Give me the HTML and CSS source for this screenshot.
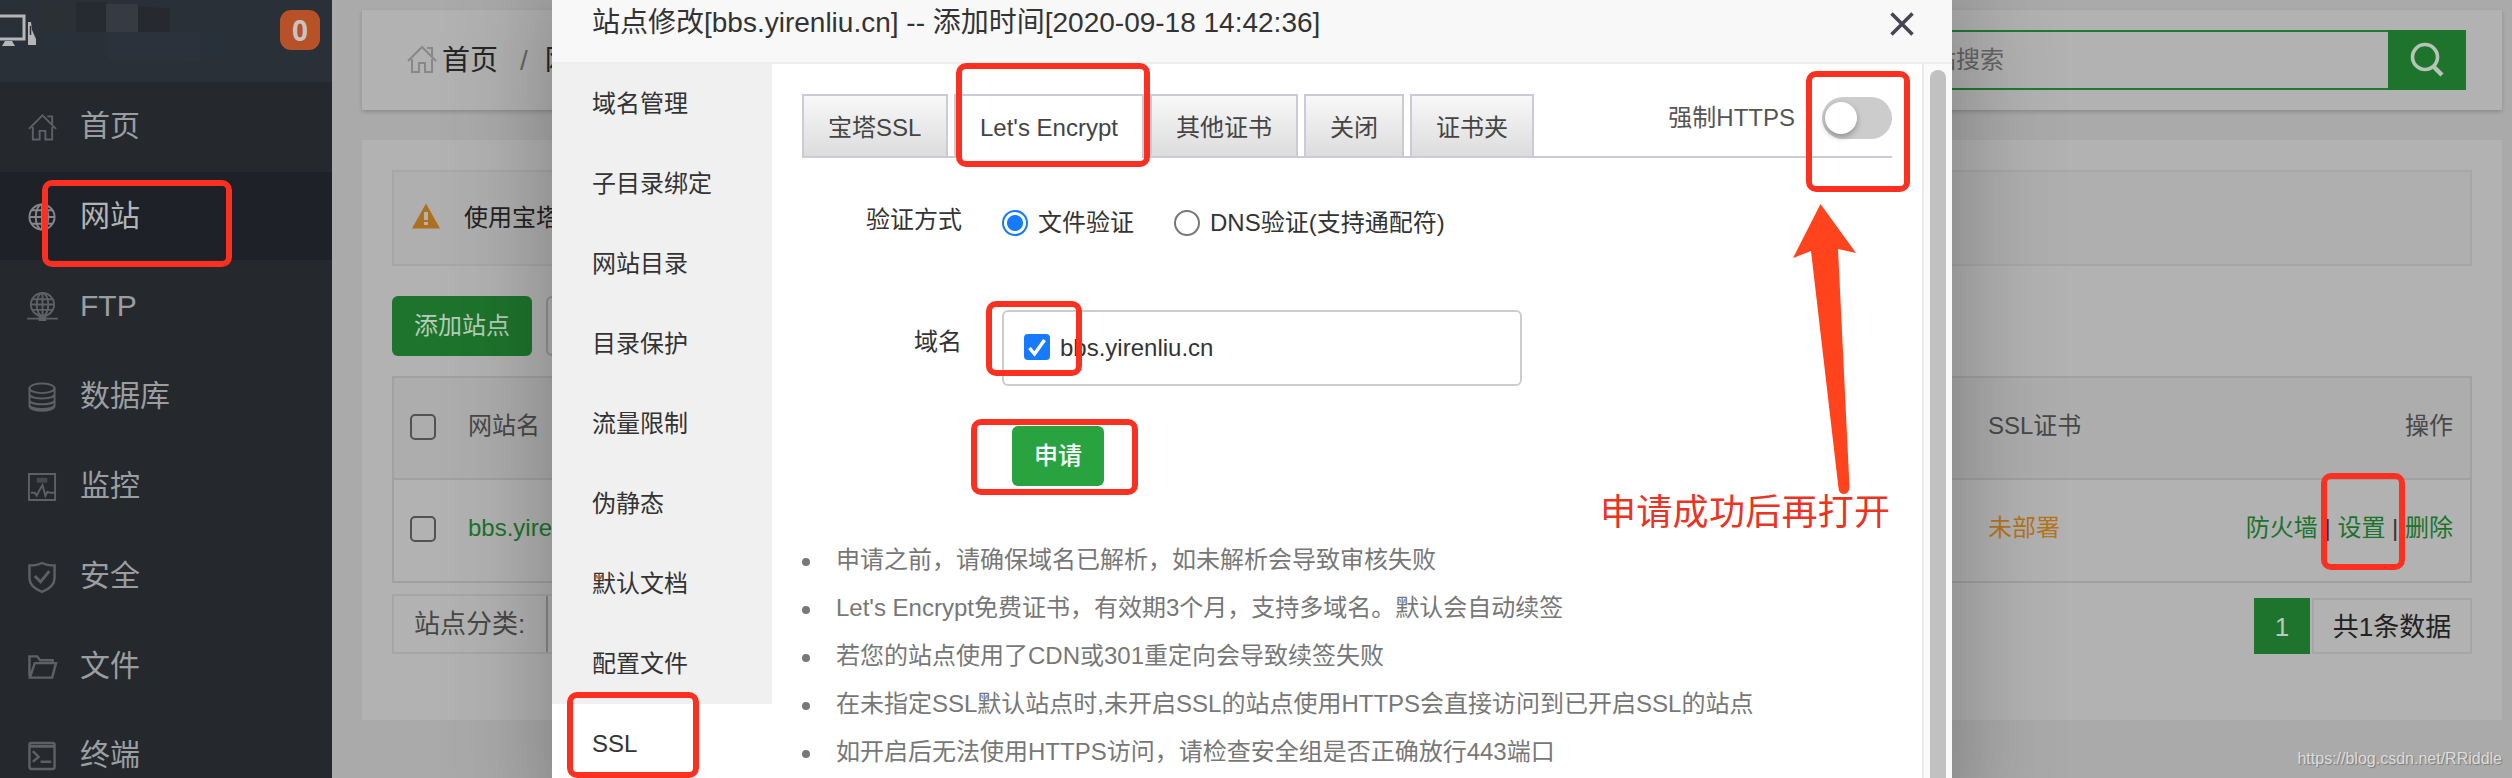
FILE: index.html
```html
<!DOCTYPE html>
<html lang="zh-CN">
<head>
<meta charset="utf-8">
<title>网站</title>
<link rel="stylesheet" href="styles.css">
</head>
<body>
<div class="app">
  <aside class="sidebar">
    <div class="brand">
      <svg class="brand-art" width="240" height="64" viewBox="0 0 240 64">
        <path fill="#2a3033" d="M40 8L46 3H76V32H40z"/><path fill="#262b31" d="M76 2H106V32H76z"/><path fill="#363a42" d="M106 4H138V32H106z"/><path fill="#26292f" d="M138 6L170 9V32H138z"/><path fill="#28303a" d="M45 32H76V54L48 50z"/><path fill="#2b323b" d="M108 32H200V62L108 60z"/><path fill="#28303a" d="M200 32H230V60H200z"/>
        <path d="M-4 16H24V39H-4z" fill="none" stroke="#b4b6b9" stroke-width="3"/><path d="M2 46l3-5h7l3 5z" fill="#b4b6b9"/><path d="M28 22h3l1 8 4 9v6h-8z" fill="#b4b6b9"/><path d="M30.500 26v9" stroke="#2a3038" stroke-width="1.500"/>
      </svg>
      <span class="badge">0</span>
    </div>
    <nav class="menu">
      <a class="menu-item"><svg class="mi" viewBox="0 0 30 30"><path d="M1 17L15 3l14 14M5 15v13h7v-9h6v9h7V15M20 4h5v8"/></svg>首页</a>
      <a class="menu-item active"><svg class="mi" viewBox="0 0 30 30"><circle cx="14.500" cy="15" r="13"/><ellipse cx="14.500" cy="15" rx="6.500" ry="13"/><path d="M14.500 2v26M1.500 15h26M4 8h21M4 22h21"/></svg>网站</a>
      <a class="menu-item"><svg class="mi" viewBox="0 0 30 30"><circle cx="15" cy="12.500" r="12"/><ellipse cx="15" cy="12.500" rx="6" ry="12"/><path d="M15 1v23M3 12.500h24M5 7h20M5 18h20M-1 27h32"/><path d="M11 27h8" stroke-width="5"/></svg>FTP</a>
      <a class="menu-item"><svg class="mi" viewBox="0 0 30 30"><ellipse cx="14.500" cy="6" rx="13" ry="5"/><path d="M1.500 6v18c0 7 26 7 26 0V6M1.500 12c0 6 26 6 26 0M1.500 18c0 6 26 6 26 0M1.500 23c0 6 26 6 26 0"/></svg>数据库</a>
      <a class="menu-item"><svg class="mi" viewBox="0 0 30 30"><path d="M1 1.500h27v27H1zM3 21h4l2 3 3-6 3-5 3 11 2-4 3 1h4"/><path d="M9 8h11" stroke-width="5" opacity=".6"/></svg>监控</a>
      <a class="menu-item"><svg class="mi" viewBox="0 0 30 30"><path stroke-width="2.500" d="M14.500 0.500c4 2 8 2.500 13 2.500v13c0 7-7 12-13 14.500C8.500 28 1.500 23 1.500 16V3c5 0 9-.5 13-2.500z"/><path stroke-width="3" d="M7 14l6 6 9-11"/></svg>安全</a>
      <a class="menu-item"><svg class="mi" viewBox="0 0 30 30"><path stroke-width="2.500" d="M3 26L1.500 24V4h8l3 4h13v3M2 26L7 11h22l-4 15z"/></svg>文件</a>
      <a class="menu-item"><svg class="mi" viewBox="0 0 30 30"><rect x="1.500" y="1.500" width="26" height="27" rx="2" stroke-width="2.500"/><path d="M2 5h25" stroke-width="3"/><path stroke-width="2.500" d="M5 10l6 6-6 5M13 21h11"/></svg>终端</a>
    </nav>
  </aside>
  <main class="main">
    <header class="topbar">
      <div class="crumbs"><svg class="home" viewBox="0 0 30 30"><path d="M1 17L15 3l14 14M5 15v13h7v-9h6v9h7V15M20 4h5v8"/></svg><span>首页</span><i>/</i><span>网站管理</span></div>
      <div class="search"><div class="search-input">网站搜索</div><div class="search-btn"><svg width="34" height="34" viewBox="0 0 34 34"><ellipse cx="15" cy="14" rx="12.500" ry="12.500"/><path d="M23 23l9 9" stroke-width="4.500"/></svg></div></div>
    </header>
    <section class="panel">
      <div class="notice"><svg width="28" height="26" viewBox="0 0 28 26"><path fill="#ad6f20" d="M14 0.500L28 25.500H0z"/><path stroke="#b5b2ae" stroke-width="4" d="M14 9v8M14 19v3"/></svg><span>使用宝塔创建</span></div>
      <div class="tools"><div class="btn add">添加站点</div><div class="btn plain"></div></div>
      <div class="table">
        <div class="tr head"><span class="box"></span><span class="name">网站名</span><span class="ssl">SSL证书</span><span class="ops">操作</span></div>
        <div class="tr"><span class="box"></span><span class="name link">bbs.yirenliu.cn</span><span class="ssl warn">未部署</span><span class="ops"><b>防火墙</b> | <b>设置</b> | <b>删除</b></span></div>
      </div>
      <div class="foot">
        <div class="category"><span>站点分类:</span><div class="select"></div></div>
        <div class="pager"><span class="page">1</span><span class="total">共1条数据</span></div>
      </div>
    </section>
  </main>
</div>

<div class="modal">
  <div class="modal-title"><span>站点修改[bbs.yirenliu.cn] -- 添加时间[2020-09-18 14:42:36]</span><svg width="24" height="24" viewBox="0 0 24 24"><path d="M1.500 1.500l21 21M22.500 1.500l-21 21"/></svg></div>
  <div class="modal-body">
    <nav class="subnav"><a>域名管理</a><a>子目录绑定</a><a>网站目录</a><a>目录保护</a><a>流量限制</a><a>伪静态</a><a>默认文档</a><a>配置文件</a><a class="on">SSL</a></nav>
    <div class="content">
      <div class="tabs"><span>宝塔SSL</span><span class="on">Let's Encrypt</span><span>其他证书</span><span>关闭</span><span>证书夹</span>
        <div class="force">强制HTTPS<div class="switch"><div class="knob"></div></div></div>
      </div>
      <div class="row verify"><label>验证方式</label><div class="opt"><i class="radio checked"></i>文件验证</div><div class="opt"><i class="radio"></i>DNS验证(支持通配符)</div></div>
      <div class="row domain"><label>域名</label><div class="domain-box"><svg width="26" height="26" viewBox="0 0 26 26"><rect width="26" height="26" rx="4" fill="#157afb"/><path d="M5.500 14l5 6L20.500 6" fill="none" stroke="#fff" stroke-width="3.500"/></svg>bbs.yirenliu.cn</div></div>
      <div class="apply">申请</div>
      <ul class="tips"><li>申请之前，请确保域名已解析，如未解析会导致审核失败</li><li>Let's Encrypt免费证书，有效期3个月，支持多域名。默认会自动续签</li><li>若您的站点使用了CDN或301重定向会导致续签失败</li><li>在未指定SSL默认站点时,未开启SSL的站点使用HTTPS会直接访问到已开启SSL的站点</li><li>如开启后无法使用HTTPS访问，请检查安全组是否正确放行443端口</li></ul>
    </div>
    <div class="scroll"><div class="thumb"></div></div>
  </div>
</div>

<div class="mark m-site"></div><div class="mark m-tab"></div><div class="mark m-check"></div><div class="mark m-apply"></div><div class="mark m-ssl"></div><div class="mark m-switch"></div><div class="mark m-set"></div>
<svg class="arrow" width="64" height="292" viewBox="0 0 64 292"><path fill="#ff431c" d="M27.500 0L63 49L45 45L56.500 283Q56 290 51 290Q46 290 45.500 284L18 47L0 54z"/></svg>
<div class="note">申请成功后再打开</div>
<div class="watermark">https://blog.csdn.net/RRiddle</div>
</body>
</html>
```

FILE: styles.css
```css
* { box-sizing: border-box; }
html { overflow: hidden; }
body { margin: 0; width: 2512px; height: 778px; overflow: hidden; position: relative; background: #aaa; font: 24px/36px "Liberation Sans", "Noto Sans CJK SC", sans-serif; color: #333; white-space: nowrap; }
svg { display: block; flex: none; overflow: visible; }
i { font-style: normal; }
.app { display: flex; height: 778px; }

/* sidebar */
.sidebar { width: 332px; height: 778px; flex: none; background: #25292e; overflow: hidden; }
.brand { height: 82px; background: #2a3037; display: flex; justify-content: space-between; padding-right: 12px; }
.badge { width: 40px; height: 40px; margin-top: 10px; border-radius: 11px; background: #b65128; color: #c9c3bf; font: bold 28px/40px "Noto Sans", sans-serif; text-align: center; }
.menu-item { display: flex; align-items: center; height: 90px; padding: 0 0 2px 28px; font-size: 30px; color: #9b9ea1; gap: 23px; }
.menu-item.active { background: #1e2127; color: #b3b4b6; height: 88px; margin-bottom: 2px; padding-bottom: 0; }
.menu-item:last-child { height: 66px; padding: 25px 0 0 28px; align-items: flex-start; }
.mi { width: 29px; height: 30px; margin-top: 2px; fill: none; stroke: #5d6165; stroke-width: 2; }
.menu-item:last-child .mi { margin-top: 4px; }
.active .mi { stroke: #85888c; }

/* page */
.main { flex: 1; padding: 10px 10px 0 30px; display: flex; flex-direction: column; gap: 30px; }
.topbar { height: 100px; background: #b2b2b2; box-shadow: 0 2px 4px rgba(0,0,0,.18); display: flex; justify-content: space-between; align-items: center; padding: 0 36px 0 45px; }
.crumbs { display: flex; font-size: 28px; color: #262626; padding-top: 1px; }
.home { width: 30px; height: 30px; margin: 1px 5px 0 0; fill: none; stroke: #888; stroke-width: 2; }
.crumbs i { margin: 0 17px 0 22px; color: #666; }
.search { display: flex; width: 620px; height: 60px; }
.search-input { flex: 1; border: 2px solid #217a31; border-right: 0; padding: 10px 0 0 60px; color: #666; }
.search-btn { width: 78px; background: #1e742c; display: flex; align-items: center; justify-content: center; }
.search-btn svg { fill: none; stroke: #b5c4b6; stroke-width: 3.600; }
.panel { height: 580px; background: #b2b2b2; padding: 30px 30px 0; }
.notice { height: 96px; border: 2px solid #a7a7a7; background: #afafaf; display: flex; align-items: center; gap: 24px; padding-left: 18px; color: #222; }
.notice svg { margin-bottom: 4px; }
.tools { display: flex; gap: 14px; margin-top: 30px; }
.btn { height: 60px; border-radius: 6px; line-height: 60px; text-align: center; }
.add { width: 140px; background: #1e742c; color: #b6cdb9; }
.plain { width: 120px; border: 2px solid #929292; }
.table { margin-top: 20px; border: 2px solid #a1a1a1; }
.tr { height: 101px; display: flex; align-items: center; padding: 0 17px 5px 16px; }
.tr.head { height: 102px; background: #adadad; border-bottom: 2px solid #a1a1a1; color: #484848; padding-bottom: 4px; }
.box { width: 26px; height: 26px; border: 2px solid #525252; border-radius: 5px; margin-top: 2px; }
.name { margin-left: 32px; width: 1520px; }
.link, .ops b { color: #1b732b; font-weight: 400; }
.warn { color: #b5751c; }
.ops { margin-left: auto; }
.foot { display: flex; justify-content: space-between; margin-top: 11px; }
.category { height: 60px; width: 420px; display: flex; border: 2px solid #a6a6a6; line-height: 56px; color: #484848; font-size: 26px; }
.category span { width: 152px; padding-left: 20px; }
.select { flex: 1; border-left: 2px solid #888; }
.pager { display: flex; height: 56px; margin-top: 4px; gap: 2px; line-height: 54px; }
.page { width: 56px; background: #1e742c; color: #b6cdb9; text-align: center; line-height: 58px; font-size: 26px; }
.total { width: 160px; border: 2px solid #a6a6a6; text-align: center; color: #222; font-size: 26px; }

/* dialog */
.modal { position: absolute; left: 552px; top: -22px; width: 1400px; height: 860px; background: #fff; box-shadow: 2px 2px 100px rgba(0,0,0,.3); padding-top: 22px; }
.modal-title { height: 64px; background: #f8f8f8; box-shadow: 0 -22px #f8f8f8; border-bottom: 2px solid #eee; display: flex; justify-content: space-between; padding: 5px 38px 0 40px; font-size: 28px; }
.modal-title svg { margin-top: 7px; stroke: #444452; stroke-width: 3.500; }
.modal-body { display: flex; height: 796px; }
.subnav { width: 220px; display: flex; flex-direction: column; }
.subnav a { height: 80px; line-height: 80px; padding-left: 40px; background: #f0f0f0; }
.subnav .on { background: #fff; }
.content { flex: 1; padding: 30px 30px 0; }
.tabs { display: flex; gap: 6px; height: 64px; border-bottom: 2px solid #cacad9; color: #444; }
.tabs > span { height: 62px; padding: 2px 24px 0; line-height: 60px; border: 2px solid #cacad9; border-bottom: 0; background: linear-gradient(#f8f8f8, #dcdcdc); }
.tabs > span:first-child { width: 146px; }
.tabs > .on { background: #fff; height: 64px; width: 190px; }
.force { margin-left: auto; height: 48px; display: flex; align-items: center; gap: 27px; color: #555; }
.switch { width: 70px; height: 42px; border-radius: 21px; background: #ccc; padding: 5px 3px; }
.knob { width: 32px; height: 32px; border-radius: 50%; background: #fff; box-shadow: 0 3px 6px rgba(0,0,0,.3); }
.row { display: flex; }
.row label { width: 160px; text-align: right; }
.verify { margin-top: 44px; }
.opt { display: flex; align-items: center; gap: 10px; margin: 3px 0 0 40px; }
.radio { width: 26px; height: 26px; border: 2px solid #777; border-radius: 50%; }
.radio.checked { border: 2.500px solid #157afb; background: radial-gradient(circle, #157afb 0 7.500px, #fff 8.500px); }
.domain { margin-top: 69px; }
.domain label { padding-top: 14px; }
.domain-box { width: 520px; height: 76px; margin-left: 40px; border: 2px solid #ccc; border-radius: 6px; display: flex; align-items: center; gap: 10px; padding-left: 20px; }
.domain-box svg { margin-bottom: 2px; }
.apply { width: 92px; height: 60px; margin: 40px 0 0 210px; background: #28a33f; color: #fff; border-radius: 6px; line-height: 60px; text-align: center; font-weight: 500; }
.tips { list-style: none; margin: 50px 0 0; padding: 0; color: #777; }
.tips li { height: 48px; line-height: 48px; display: flex; align-items: center; }
.tips li::before { content: ""; width: 8px; height: 8px; border-radius: 50%; background: #777; margin: 4px 26px 0 0; }
.scroll { width: 30px; background: #fafafa; border-left: 2px solid #e9e9e9; padding: 6px 6px 0; }
.thumb { width: 16px; height: 100%; border-radius: 8px; background: #c1c1c1; }

/* callouts drawn over the page */
.mark { position: absolute; border: 6px solid #fc3020; border-radius: 10px; }
.m-site { left: 42px; top: 180px; width: 190px; height: 87px; }
.m-tab { left: 956px; top: 63px; width: 194px; height: 104px; }
.m-check { left: 986px; top: 301px; width: 96px; height: 75px; }
.m-apply { left: 971px; top: 419px; width: 167px; height: 76px; }
.m-ssl { left: 567px; top: 692px; width: 132px; height: 86px; }
.m-switch { left: 1806px; top: 71px; width: 104px; height: 121px; }
.m-set { left: 2321px; top: 473px; width: 84px; height: 97px; }
.arrow { position: absolute; left: 1793px; top: 204px; }
.note { position: absolute; left: 1600px; top: 487px; font-size: 36px; line-height: 52px; color: #ea3323; letter-spacing: .3px; }
.watermark { position: absolute; right: 10px; bottom: 6px; font-size: 16px; line-height: 26px; color: #dcdcdc; text-shadow: 1px 1px 1px #777; }
```
